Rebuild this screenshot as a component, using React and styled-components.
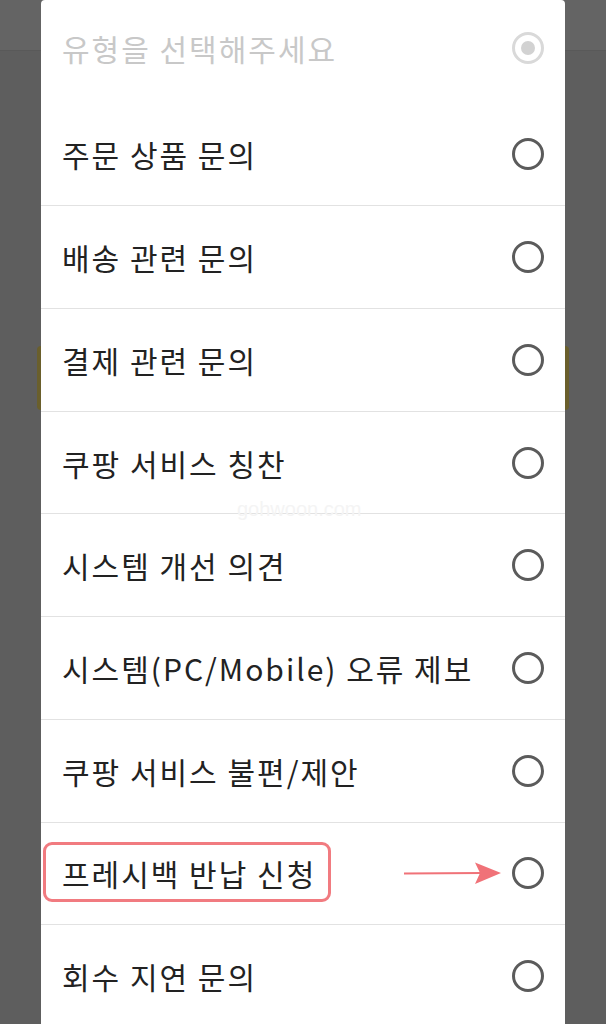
import React from "react";
import styled, { createGlobalStyle } from "styled-components";

const Global = createGlobalStyle`
  html, body { margin: 0; padding: 0; }
  body {
    background: #5e5e5e;
    font-family: "Noto Sans CJK KR", "Noto Sans", sans-serif;
    overflow: hidden;
  }
`;

const Screen = styled.div`
  display: grid;
  width: 606px;
  height: 1024px;
  overflow: hidden;
`;

const BehindPage = styled.div`
  grid-area: 1 / 1;
  display: flex;
  flex-direction: column;
  background: #5e5e5e;
`;

const BehindHeader = styled.div`
  height: 50px;
  background: #646464;
  border-bottom: 1px solid #595959;
`;

const BehindSpacer = styled.div`
  height: ${(p) => p.$h}px;
`;

const BehindButton = styled.div`
  height: 64px;
  margin: 0 37px;
  background: #6a5f2c;
  border-radius: 4px;
`;

const Dialog = styled.div`
  grid-area: 1 / 1;
  align-self: start;
  margin: 0 41px;
  background: #ffffff;
  border-radius: 4px 4px 0 0;
  position: relative;
  display: flex;
  flex-direction: column;
`;

const Row = styled.div`
  box-sizing: border-box;
  height: 102.7px;
  flex-shrink: 0;
  display: flex;
  align-items: center;
  padding: 0 21px 0 21px;
  border-top: ${(p) => (p.$divider ? "1px solid #e2e2e2" : "none")};
  padding-bottom: ${(p) => (p.$placeholder ? "6px" : "0")};
`;

const Label = styled.span`
  font-size: 30px;
  color: ${(p) => (p.$placeholder ? "#c8c8c8" : "#222222")};
  letter-spacing: 2px;
  white-space: nowrap;
  position: relative;
  line-height: 1;
  ${(p) =>
    p.$highlight &&
    `
    &::before {
      content: "";
      position: absolute;
      left: -19px;
      right: -15px;
      top: -16px;
      bottom: -14px;
      border: 3.5px solid #f17b80;
      border-radius: 9px;
    }
  `}
`;

const Trailing = styled.div`
  margin-left: auto;
  display: flex;
  align-items: center;
  gap: 10px;
`;

const Radio = styled.span`
  box-sizing: border-box;
  width: 32px;
  height: 32px;
  border-radius: 50%;
  border: 3px solid ${(p) => (p.$disabled ? "#d9d9d9" : "#5b5b5b")};
  display: flex;
  align-items: center;
  justify-content: center;
  &::after {
    content: "";
    display: ${(p) => (p.$checked ? "block" : "none")};
    width: 14px;
    height: 14px;
    border-radius: 50%;
    background: #d2d2d2;
  }
`;

const Watermark = styled.span`
  position: absolute;
  left: 196px;
  top: 498px;
  font-family: "Liberation Sans", sans-serif;
  font-size: 20px;
  color: #f4f4f4;
  pointer-events: none;
`;

const Arrow = () => (
  <svg width="98" height="24" viewBox="0 0 98 24">
    <line x1="0" y1="12.5" x2="78" y2="12" stroke="#f07278" strokeWidth="2.2" />
    <path d="M71 1.5 L97 12 L71 23 L76 12 Z" fill="#f07278" />
  </svg>
);

const options = [
  "주문 상품 문의",
  "배송 관련 문의",
  "결제 관련 문의",
  "쿠팡 서비스 칭찬",
  "시스템 개선 의견",
  "시스템(PC/Mobile) 오류 제보",
  "쿠팡 서비스 불편/제안",
  "프레시백 반납 신청",
  "회수 지연 문의",
];

export default function App() {
  return (
    <Screen>
      <Global />
      <BehindPage>
        <BehindHeader />
        <BehindSpacer $h={295} />
        <BehindButton />
      </BehindPage>
      <Dialog>
        <Row $placeholder>
          <Label $placeholder>유형을 선택해주세요</Label>
          <Trailing>
            <Radio $disabled $checked />
          </Trailing>
        </Row>
        {options.map((o, i) => {
          const hl = o === "프레시백 반납 신청";
          return (
            <Row key={o} $divider={i > 0}>
              <Label $highlight={hl}>{o}</Label>
              <Trailing>
                {hl && <Arrow />}
                <Radio />
              </Trailing>
            </Row>
          );
        })}
        <Watermark>gohwoon.com</Watermark>
      </Dialog>
    </Screen>
  );
}
